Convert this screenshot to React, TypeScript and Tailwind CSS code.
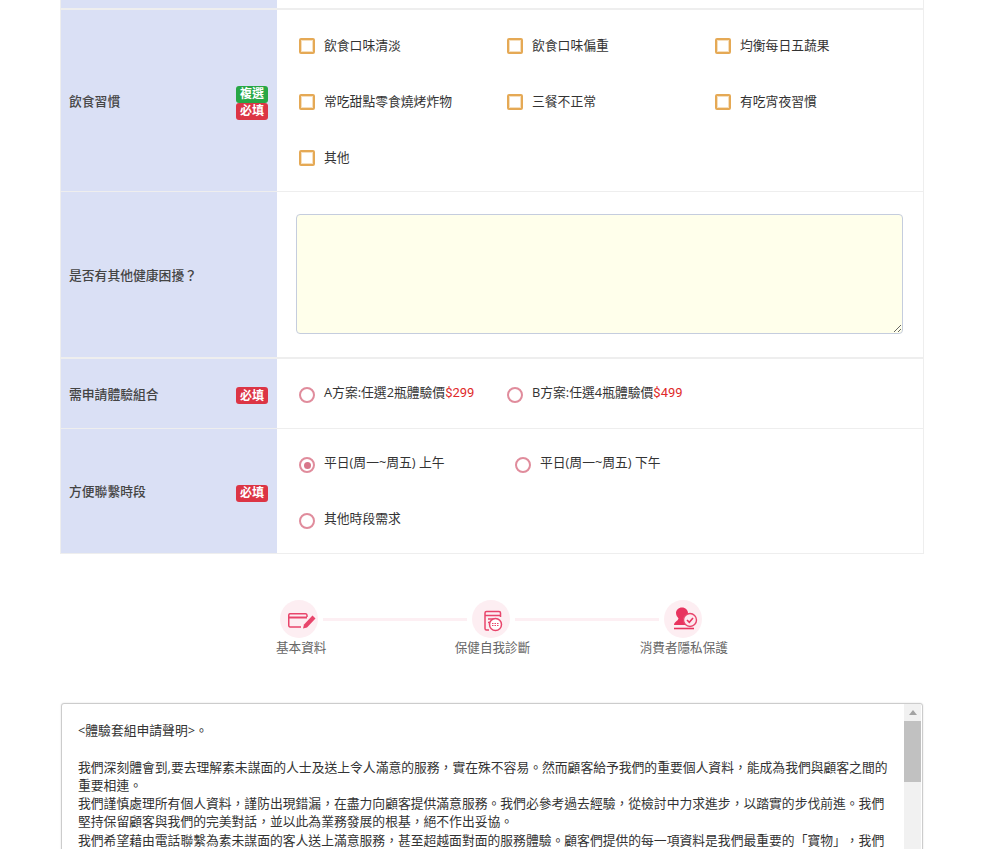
const font = "font-['Open_Sans','Noto_Sans_CJK_TC',sans-serif]";

function Badge({ label, color }: { label: string; color: string }) {
  return (
    <span className={`flex h-[17px] w-8 items-center justify-center rounded-[3px] text-[12px] font-bold leading-none text-white ${color}`}>
      {label}
    </span>
  );
}

function Row({ label, badges, className, children }: { label: string; badges?: string[]; className: string; children: React.ReactNode }) {
  return (
    <div className={`flex ${className}`}>
      <div className="flex w-[216px] shrink-0 items-center justify-between bg-[#dae0f5] pl-2 pr-[9px] pt-[2px] text-[12.8px] font-medium text-[#444]">
        <span>{label}</span>
        {badges && (
          <div className="mt-[2px] flex flex-col">
            {badges.map((b) => (
              <Badge key={b} label={b} color={b === "複選" ? "bg-[#28a745]" : "bg-[#dc3545]"} />
            ))}
          </div>
        )}
      </div>
      <div className="min-w-0 flex-1 bg-white">{children}</div>
    </div>
  );
}

function Check({ label }: { label: string }) {
  return (
    <label className="flex h-14 w-[208px] items-center">
      <span className="ml-[1px] h-4 w-4 rounded-[2px] border-2 border-[#e5a955] bg-white shadow-[inset_0_0_0_1px_#f6dfbd]" />
      <span className="ml-[9px] text-[12.8px] text-[#333]">{label}</span>
    </label>
  );
}

function Radio({ label, price, checked, width }: { label: string; price?: string; checked?: boolean; width: string }) {
  return (
    <label className={`flex h-14 items-center ${width}`}>
      <span className="ml-[1px] mt-[2px] flex h-4 w-4 items-center justify-center rounded-full border-2 border-[#e08c9c] bg-white">
        {checked && <span className="h-[7px] w-[7px] rounded-full bg-[#d8768a]" />}
      </span>
      <span className="-mt-[2px] ml-[9px] text-[12.8px] text-[#333]">
        {label}
        {price && <span className="font-['Roboto',sans-serif] text-[13px] text-[#e02a2a]">{price}</span>}
      </span>
    </label>
  );
}

function CardIcon() {
  return (
    <svg width="38" height="38" viewBox="0 0 38 38" fill="none">
      <path d="M27 17V15A1.500 1.500 0 0 0 25.500 13.750H10A1.500 1.500 0 0 0 8.750 15V25.500A1.500 1.500 0 0 0 10 27H21" stroke="#e8456b" strokeWidth="1.500" />
      <path d="M9 17.500H27" stroke="#e8456b" strokeWidth="2" />
      <path d="M23 28.500L24 24.500L32.500 15.500L35.500 18.500L27 27.500Z" fill="#e8456b" />
    </svg>
  );
}

function ReportIcon() {
  return (
    <svg width="38" height="38" viewBox="0 0 38 38" fill="none">
      <path d="M17 30H14.500A1.500 1.500 0 0 1 13 28.500V13A1.500 1.500 0 0 1 14.500 11.500H27A1.500 1.500 0 0 1 28.500 13V17" stroke="#e8456b" strokeWidth="1.500" />
      <path d="M13 15.500H28M16 19H24M16 22.500H18" stroke="#e8456b" strokeWidth="1.500" />
      <circle cx="23.500" cy="24.500" r="6" fill="#fff" stroke="#e8456b" strokeWidth="1.500" />
      <path d="M20 23.500H27M20 25.500H27" stroke="#e8456b" strokeWidth="1.200" strokeDasharray="1.500 1" />
    </svg>
  );
}

function StampIcon() {
  return (
    <svg width="38" height="38" viewBox="0 0 38 38" fill="none">
      <path d="M18 7.500C21.500 7.500 24 10 24 13C24 15.500 22.500 17 22 18.500C22 20.500 25 21 26 25H10C10 22 14 21 14.500 18.500C13.500 17 12 15.500 12 13C12 10 14.500 7.500 18 7.500Z" fill="#e8345f" />
      <circle cx="26" cy="20" r="6.500" fill="#fde9ef" stroke="#e8456b" strokeWidth="1.400" />
      <path d="M23 20L25.300 22.300L29 18" stroke="#e8345f" strokeWidth="1.600" />
      <path d="M10 28.500H30" stroke="#e8345f" strokeWidth="1.600" />
    </svg>
  );
}

function Circle({ children }: { children: React.ReactNode }) {
  return <div className="flex h-[38px] w-[38px] shrink-0 items-center justify-center rounded-full bg-[#fdeef2]">{children}</div>;
}

export default function App() {
  return (
    <div className={`h-[849px] overflow-hidden bg-white ${font}`}>
      <div className="mx-[60px] w-[864px] border-x border-[#eee]">
        <Row label="" className="h-[10px] border-b-2 border-[#eee]">
          <div />
        </Row>
        <Row label="飲食習慣" badges={["複選", "必填"]} className="h-[182px] border-b border-[#eee]">
          <div className="flex flex-wrap pl-[21px] pt-2">
            <Check label="飲食口味清淡" />
            <Check label="飲食口味偏重" />
            <Check label="均衡每日五蔬果" />
            <Check label="常吃甜點零食燒烤炸物" />
            <Check label="三餐不正常" />
            <Check label="有吃宵夜習慣" />
            <Check label="其他" />
          </div>
        </Row>
        <Row label="是否有其他健康困擾？" className="h-[167px] border-b-2 border-[#eee]">
          <div className="pl-[19px] pt-[22px]">
            <textarea className="block h-[120px] w-[607px] rounded border border-[#c5cdde] bg-[#ffffeb]" />
          </div>
        </Row>
        <Row label="需申請體驗組合" badges={["必填"]} className="h-[70px] border-b border-[#eee]">
          <div className="flex pl-[21px] pt-[7px]">
            <Radio width="w-[208px]" label="A方案:任選2瓶體驗價" price="$299" />
            <Radio width="w-[208px]" label="B方案:任選4瓶體驗價" price="$499" />
          </div>
        </Row>
        <Row label="方便聯繫時段" badges={["必填"]} className="h-[125px] border-b border-[#eee]">
          <div className="flex flex-wrap pl-[21px] pt-[7px]">
            <Radio width="w-[216px]" label="平日(周一~周五) 上午" checked />
            <Radio width="w-[216px]" label="平日(周一~周五) 下午" />
            <div className="w-full" />
            <Radio width="w-[216px]" label="其他時段需求" />
          </div>
        </Row>
      </div>

      <div className="mt-[46px] flex flex-col items-center">
        <div className="flex items-center pr-[10px]">
          <Circle><CardIcon /></Circle>
          <div className="mx-[5px] h-[3px] w-[144px] bg-[#fdeff3]" />
          <Circle><ReportIcon /></Circle>
          <div className="mx-[5px] h-[3px] w-[144px] bg-[#fdeff3]" />
          <Circle><StampIcon /></Circle>
        </div>
        <div className="mt-[1px] grid w-[574px] -translate-x-[3px] grid-cols-3 text-center text-[12.6px] leading-[18px] text-[#666]">
          <span>基本資料</span>
          <span>保健自我診斷</span>
          <span>消費者隱私保護</span>
        </div>
      </div>

      <div className="mx-[61px] mt-[46px] flex h-[200px] w-[862px] rounded-[3px] border border-[#ccc] bg-white shadow-[0_0_2px_#ddd]">
        <div className="min-w-0 flex-1 px-4 pt-[17px] text-[12.8px] leading-[18.3px] text-[#333] [text-spacing-trim:space-all]">
          <p>&lt;體驗套組申請聲明&gt;。</p>
          <br />
          <p>我們深刻體會到,要去理解素未謀面的人士及送上令人滿意的服務，實在殊不容易。然而顧客給予我們的重要個人資料，能成為我們與顧客之間的重要相連。</p>
          <p>我們謹慎處理所有個人資料，謹防出現錯漏，在盡力向顧客提供滿意服務。我們必參考過去經驗，從檢討中力求進步，以踏實的步伐前進。我們堅持保留顧客與我們的完美對話，並以此為業務發展的根基，絕不作出妥協。</p>
          <p>我們希望藉由電話聯繫為素未謀面的客人送上滿意服務，甚至超越面對面的服務體驗。顧客們提供的每一項資料是我們最重要的「寶物」，我們</p>
        </div>
        <div className="mr-[1px] flex w-[17px] shrink-0 flex-col items-center bg-[#f1f1f1]">
          <div className="mt-[6px] h-0 w-0 border-x-4 border-b-[5px] border-x-transparent border-b-[#a3a3a3]" />
          <div className="mt-[6px] h-[61px] w-full bg-[#c1c1c1]" />
        </div>
      </div>
    </div>
  );
}
